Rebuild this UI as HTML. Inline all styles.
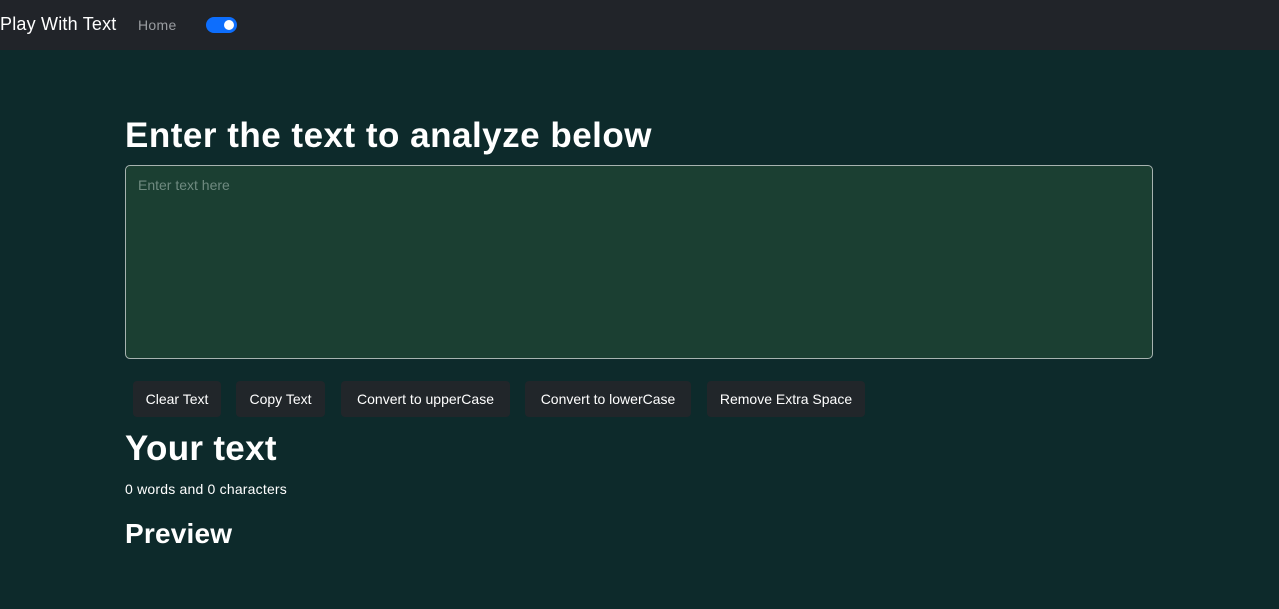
<!DOCTYPE html>
<html><head><meta charset="utf-8"><style>
*{box-sizing:border-box;margin:0;padding:0}
body{width:1279px;height:609px;background:#0d2a2b;font-family:"Liberation Sans",sans-serif;color:#fff;position:relative;overflow:hidden}
.nav{position:absolute;left:0;top:0;width:1279px;height:50px;background:#212429}
.brand{position:absolute;left:0;top:14px;font-size:18px;color:#fff;letter-spacing:0.2px}
.home{position:absolute;left:138px;top:17px;font-size:14px;color:#9a9da1;letter-spacing:0.3px}
.tog{position:absolute;left:206px;top:17px;width:31px;height:16px;border-radius:8px;background:#0d6efd}
.tog::after{content:"";position:absolute;right:3px;top:3px;width:10px;height:10px;border-radius:50%;background:#fff}
h1{position:absolute;left:125px;top:116px;font-size:35px;font-weight:bold;letter-spacing:0.5px}
.ta{position:absolute;left:125px;top:165px;width:1028px;height:194px;background:#1b3f32;border:1px solid #a7b3b0;border-radius:5px}
.ta span{position:absolute;left:12px;top:11px;font-size:14px;color:#6f8a80}
.btn{position:absolute;top:381px;height:36px;background:#21262a;border-radius:4px;font-size:14px;line-height:36px;text-align:center;color:#fff}
h2{position:absolute;left:125px;top:429px;font-size:35px;font-weight:bold;letter-spacing:0.3px}
.p{position:absolute;left:125px;top:481px;font-size:14px;letter-spacing:0.2px}
h3{position:absolute;left:125px;top:518px;font-size:28px;font-weight:bold;letter-spacing:0.2px}
</style></head><body>
<div class="nav"><div class="brand">Play With Text</div><div class="home">Home</div><div class="tog"></div></div>
<h1>Enter the text to analyze below</h1>
<div class="ta"><span>Enter text here</span></div>
<div class="btn" style="left:133px;width:88px">Clear Text</div>
<div class="btn" style="left:236px;width:89px">Copy Text</div>
<div class="btn" style="left:341px;width:169px">Convert to upperCase</div>
<div class="btn" style="left:525px;width:166px">Convert to lowerCase</div>
<div class="btn" style="left:707px;width:158px">Remove Extra Space</div>
<h2>Your text</h2>
<div class="p">0 words and 0 characters</div>
<h3>Preview</h3>
</body></html>
